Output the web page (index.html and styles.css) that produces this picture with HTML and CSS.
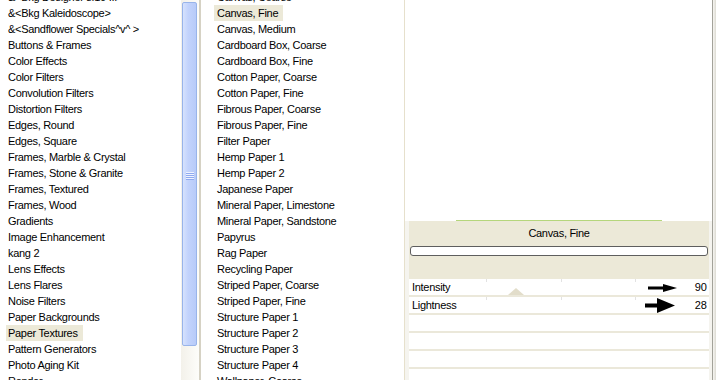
FILE: index.html
```html
<!DOCTYPE html>
<html lang="en">
<head>
    <meta charset="UTF-8">
    <title>Effect Browser - Paper Textures</title>
    <link rel="stylesheet" href="styles.css">
</head>
<body>
    <div class="window">
        <!-- Category list -->
        <div class="list-pane cats">
            <ul class="list">
                <li><span>&amp;&lt;Bkg Designer sf10 III&gt;</span></li>
                <li><span>&amp;&lt;Bkg Kaleidoscope&gt;</span></li>
                <li><span>&amp;&lt;Sandflower Specials^v^ &gt;</span></li>
                <li><span>Buttons &amp; Frames</span></li>
                <li><span>Color Effects</span></li>
                <li><span>Color Filters</span></li>
                <li><span>Convolution Filters</span></li>
                <li><span>Distortion Filters</span></li>
                <li><span>Edges, Round</span></li>
                <li><span>Edges, Square</span></li>
                <li><span>Frames, Marble &amp; Crystal</span></li>
                <li><span>Frames, Stone &amp; Granite</span></li>
                <li><span>Frames, Textured</span></li>
                <li><span>Frames, Wood</span></li>
                <li><span>Gradients</span></li>
                <li><span>Image Enhancement</span></li>
                <li><span>kang 2</span></li>
                <li><span>Lens Effects</span></li>
                <li><span>Lens Flares</span></li>
                <li><span>Noise Filters</span></li>
                <li><span>Paper Backgrounds</span></li>
                <li class="selected"><span>Paper Textures</span></li>
                <li><span>Pattern Generators</span></li>
                <li><span>Photo Aging Kit</span></li>
                <li><span>Render</span></li>
            </ul>
        </div>

        <div class="scrollbar">
            <div class="thumb"><span class="grip"></span></div>
        </div>

        <!-- Texture list -->
        <div class="list-pane textures">
            <ul class="list">
                <li><span>Canvas, Coarse</span></li>
                <li class="selected"><span>Canvas, Fine</span></li>
                <li><span>Canvas, Medium</span></li>
                <li><span>Cardboard Box, Coarse</span></li>
                <li><span>Cardboard Box, Fine</span></li>
                <li><span>Cotton Paper, Coarse</span></li>
                <li><span>Cotton Paper, Fine</span></li>
                <li><span>Fibrous Paper, Coarse</span></li>
                <li><span>Fibrous Paper, Fine</span></li>
                <li><span>Filter Paper</span></li>
                <li><span>Hemp Paper 1</span></li>
                <li><span>Hemp Paper 2</span></li>
                <li><span>Japanese Paper</span></li>
                <li><span>Mineral Paper, Limestone</span></li>
                <li><span>Mineral Paper, Sandstone</span></li>
                <li><span>Papyrus</span></li>
                <li><span>Rag Paper</span></li>
                <li><span>Recycling Paper</span></li>
                <li><span>Striped Paper, Coarse</span></li>
                <li><span>Striped Paper, Fine</span></li>
                <li><span>Structure Paper 1</span></li>
                <li><span>Structure Paper 2</span></li>
                <li><span>Structure Paper 3</span></li>
                <li><span>Structure Paper 4</span></li>
                <li><span>Wallpaper, Coarse</span></li>
            </ul>
        </div>

        <!-- Preview and settings -->
        <div class="preview-pane">
            <div class="preview">
                <div class="preview-image"></div>
            </div>
            <div class="settings">
                <div class="caption-band">
                    <div class="caption">Canvas, Fine</div>
                    <div class="progress"></div>
                </div>
                <div class="params">
                    <div class="param first">
                        <span class="label">Intensity</span>
                        <span class="value">90</span>
                        <span class="tick t1"></span><span class="tick t2"></span><span class="tick t3"></span>
                        <span class="marker"></span>
                        <svg class="arrow arrow-small" width="30" height="10" viewBox="0 0 30 10">
                            <path d="M0 3.5 H15 V1 L29 5 L15 9 V6.5 H0 Z" fill="#000"/>
                        </svg>
                    </div>
                    <div class="param">
                        <span class="label">Lightness</span>
                        <span class="value">28</span>
                        <span class="tick t1"></span><span class="tick t2"></span><span class="tick t3"></span>
                        <svg class="arrow arrow-big" width="31" height="16" viewBox="0 0 31 16">
                            <path d="M0 5.5 H12 V0 L30 7.5 L12 15 V9.5 H0 Z" fill="#000"/>
                        </svg>
                    </div>
                    <div class="param"></div>
                    <div class="param"></div>
                    <div class="param"></div>
                    <div class="param"></div>
                </div>
            </div>
        </div>
        <div class="frame-edge"></div>
    </div>
</body>
</html>
```

FILE: styles.css
```css
body { margin: 0; background: #fff; font-family: "Liberation Sans", Arial, sans-serif; font-size: 11px; letter-spacing: -0.3px; color: #000; }
.window { display: flex; width: 716px; height: 380px; overflow: hidden; }

.list-pane { background: #fff; overflow: hidden; }
.list { list-style: none; margin: -11px 0 0 0; padding: 0; }
.list li { height: 16px; line-height: 16px; white-space: nowrap; }
.list li span { display: inline-block; padding: 0 5px 0 2px; }
.list li.selected span { background: #ece9d8; }

.cats { width: 181px; }
.cats .list { padding-left: 6px; }

.scrollbar { width: 15px; padding: 0 2px 0 1px; background: linear-gradient(to right, #f3f1ea, #fdfdfa); }
.thumb { position: relative; margin-top: 2px; height: 344px; border: 1px solid #98b4ea; border-radius: 2px; background: linear-gradient(to right, #d6e2fd, #c2d3fc 40%, #b8cbf8); box-sizing: border-box; }
.grip { position: absolute; left: 3px; top: 169px; width: 8px; height: 8px; background: repeating-linear-gradient(to bottom, #eef3ff 0 1px, #8faaf0 1px 2px); }

.textures { width: 203px; border-left: 2px solid #d6d2c4; border-right: 1px solid #e6e0cc; }
.textures .list { padding-left: 13px; }
.textures .list li span { padding-left: 3px; }

.preview-pane { width: 307px; display: flex; flex-direction: column; border-right: 1px solid #a3a29a; }
.preview { height: 221px; flex: none; background: #fff; display: flex; justify-content: center; align-items: flex-end; }
.preview-image { width: 206px; height: 1px; background: #b5d67c; }

.settings { flex: 1; background: #f5f4ef; padding: 0 3px 0 4px; }
.caption-band { height: 58px; background: #ece9d8; padding-top: 4px; box-sizing: border-box; }
.caption { text-align: center; line-height: 16px; }
.progress { margin: 5px 1px 0 1px; height: 10px; border: 1px solid #5e5e5e; border-radius: 3px; background: #fff; box-sizing: border-box; }

.param { position: relative; height: 16px; line-height: 16px; background: #fff; border-bottom: 2px solid #ebe8da; display: flex; justify-content: space-between; padding: 0 2px 0 3px; }
.value { letter-spacing: 0; }
.tick { position: absolute; top: 0; width: 1px; height: 3px; background: #e2e2e2; }
.t1 { left: 77px; }
.t2 { left: 152px; }
.t3 { left: 226px; }
.marker { position: absolute; left: 99px; bottom: 0; width: 0; height: 0; border-left: 8px solid transparent; border-right: 8px solid transparent; border-bottom: 7px solid #e2ddca; }
.arrow { position: absolute; }
.arrow-small { left: 239px; top: 4px; }
.arrow-big { left: 236px; top: 1px; }

.frame-edge { width: 3px; background: linear-gradient(to right, #f7f6f2, #dcdad2); }
```
